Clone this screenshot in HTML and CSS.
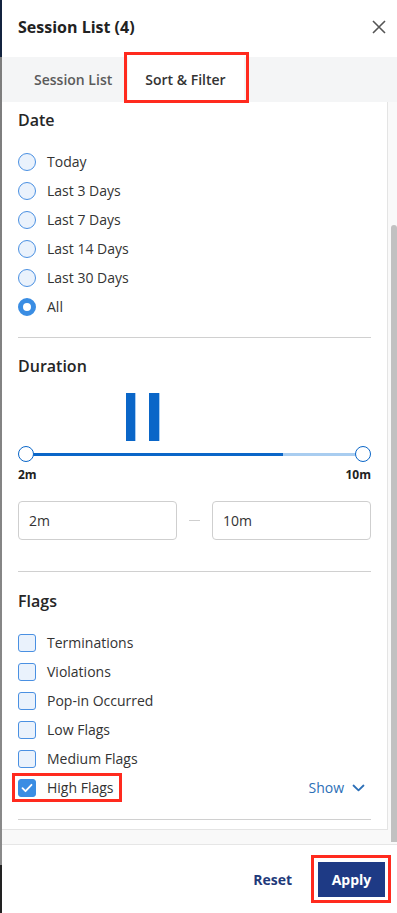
FILE: index.html
```html
<!DOCTYPE html>
<html lang="en">
<head>
<meta charset="utf-8">
<title>Session List</title>
<link rel="stylesheet" href="styles.css">
</head>
<body>
<div class="page">
  <div class="edge"></div>
  <div class="panel">
    <header class="head">
      <h1 class="title">Session List (4)</h1>
      <button class="close" aria-label="Close">
        <svg width="14" height="14" viewBox="0 0 14 14"><path d="M1 1L13 13M13 1L1 13" stroke="#555" stroke-width="1.6" fill="none"/></svg>
      </button>
    </header>
    <nav class="tabs">
      <div class="tab">Session List</div>
      <div class="tab active">Sort &amp; Filter<span class="mark mark-tab"></span></div>
    </nav>
    <div class="scroll">
      <div class="viewport">
        <div class="card">
          <section class="sec sec-date">
            <h2 class="h">Date</h2>
            <ul class="opts">
              <li class="opt"><span class="radio"></span>Today</li>
              <li class="opt"><span class="radio"></span>Last 3 Days</li>
              <li class="opt"><span class="radio"></span>Last 7 Days</li>
              <li class="opt"><span class="radio"></span>Last 14 Days</li>
              <li class="opt"><span class="radio"></span>Last 30 Days</li>
              <li class="opt"><span class="radio on"></span>All</li>
            </ul>
          </section>
          <section class="sec sec-dur">
            <h2 class="h">Duration</h2>
            <div class="hist">
              <span class="bar b1"></span>
              <span class="bar b2"></span>
            </div>
            <div class="slider">
              <div class="track"><div class="fill" style="width:76.3%"></div></div>
              <span class="knob"></span>
              <span class="knob"></span>
            </div>
            <div class="ends"><span>2m</span><span>10m</span></div>
            <div class="range">
              <div class="field">2m</div>
              <span class="dash"></span>
              <div class="field">10m</div>
            </div>
          </section>
          <section class="sec sec-flags">
            <h2 class="h">Flags</h2>
            <ul class="opts">
              <li class="opt"><span class="check"></span>Terminations</li>
              <li class="opt"><span class="check"></span>Violations</li>
              <li class="opt"><span class="check"></span>Pop-in Occurred</li>
              <li class="opt"><span class="check"></span>Low Flags</li>
              <li class="opt"><span class="check"></span>Medium Flags</li>
              <li class="opt last">
                <span class="hl"><span class="check on"><svg width="12" height="10" viewBox="0 0 12 10"><path d="M1.5 5.2L4.5 8.2L10.5 1.8" stroke="#fff" stroke-width="1.8" fill="none" stroke-linecap="round" stroke-linejoin="round"/></svg></span>High Flags<span class="mark mark-flag"></span></span>
                <span class="show">Show <svg width="13" height="8" viewBox="0 0 13 8"><path d="M1.5 1.5L6.5 6.3L11.5 1.5" stroke="#2c6fb7" stroke-width="1.8" fill="none" stroke-linecap="round" stroke-linejoin="round"/></svg></span>
              </li>
            </ul>
          </section>
        </div>
      </div>
      <div class="sbar"><div class="thumb"></div></div>
    </div>
    <footer class="foot">
      <button class="reset">Reset</button>
      <button class="apply">Apply<span class="mark mark-apply"></span></button>
    </footer>
  </div>
</div>
</body>
</html>
```

FILE: styles.css
```css
* { box-sizing: border-box; }
html, body { margin: 0; padding: 0; }
body {
  font-family: "Open Sans", "Noto Sans", sans-serif;
  color: #333;
  background: #fff;
}
.page {
  display: flex;
  width: 397px;
  height: 913px;
  overflow: hidden;
}
.edge {
  width: 2px;
  flex: none;
  background: linear-gradient(#13233f 0, #13233f 57px, #7d7d7d 57px, #8a8a8a 865px, #222 865px);
}
.panel {
  flex: 1;
  display: flex;
  flex-direction: column;
  background: #fff;
}
.head {
  height: 57px;
  display: flex;
  align-items: center;
  justify-content: space-between;
  padding: 0 10px 3px 16px;
}
.title {
  margin: 0;
  font-size: 16px;
  font-weight: 700;
  color: #222;
}
.close {
  border: 0;
  background: none;
  padding: 0;
  width: 16px;
  height: 16px;
  display: flex;
  align-items: center;
  justify-content: center;
}
.tabs {
  height: 45px;
  background: #f4f5f6;
  display: flex;
  padding-left: 15px;
}
.tab {
  position: relative;
  display: flex;
  align-items: center;
  padding: 0 17px;
  font-size: 14px;
  font-weight: 600;
  color: #5a5a5a;
}
.tab.active {
  background: #fff;
  color: #333;
  margin-left: -1px;
  padding: 0 18px 0 17px;
  border-bottom: 1.5px solid #6b4fa0;
}
.mark {
  position: absolute;
  border: 3px solid #ff2a1e;
  pointer-events: none;
}
.mark-tab { left: -4px; right: -5px; top: -5px; bottom: -2px; }
.scroll {
  height: 743px;
  display: flex;
  border-bottom: 1px solid #e6e6e6;
}
.viewport {
  flex: 1;
  background: #f9f9f9;
}
.card {
  height: 728px;
  background: #fff;
  border-right: 1px solid #e4e4e4;
  border-bottom: 1px solid #e4e4e4;
  padding: 7px 16px 0 16px;
  overflow: hidden;
}
.sbar {
  width: 9px;
  background: #f9f9f9;
  padding: 123px 0 2px 3px;
}
.thumb {
  height: 100%;
  background: #c1c1c1;
  border-radius: 3px 3px 0 0;
}
.sec { border-bottom: 1px solid #d0d0d0; }
.h {
  margin: 0;
  font-size: 16px;
  line-height: 22px;
  font-weight: 600;
  color: #262626;
}
.opts {
  list-style: none;
  margin: 16px 0 0;
  padding: 0;
}
.opt {
  height: 29px;
  display: flex;
  align-items: center;
  font-size: 14px;
  color: #333;
}
.sec-date { padding-bottom: 16px; }
.sec-dur { padding-top: 17px; padding-bottom: 31px; }
.sec-flags { padding-top: 18px; padding-bottom: 17px; }
.radio {
  width: 18px;
  height: 18px;
  border-radius: 50%;
  border: 1.5px solid #4a90e2;
  background: #eaf2fc;
  margin-right: 11px;
  flex: none;
}
.radio.on {
  background: #fff;
  border: 5px solid #3a8de3;
}
.check {
  width: 18px;
  height: 18px;
  border-radius: 3px;
  border: 1.5px solid #4a90e2;
  background: #eaf2fc;
  margin-right: 11px;
  flex: none;
  display: flex;
  align-items: center;
  justify-content: center;
}
.check.on {
  background: #3a8de3;
  border-color: #3a8de3;
}
.last { justify-content: space-between; }
.hl {
  position: relative;
  display: flex;
  align-items: center;
}
.mark-flag { left: -6px; right: -8px; top: -5px; bottom: -5px; }
.show {
  display: flex;
  align-items: center;
  gap: 8px;
  color: #2c6fb7;
  font-size: 14px;
  margin-right: 6px;
}
.hist {
  margin-top: 16px;
  height: 48px;
  display: flex;
  gap: 14px;
  padding-left: 108px;
}
.bar {
  width: 9px;
  height: 48px;
  background: #0a66c8;
  box-shadow: 1px 0 0 #a9cdf2;
}
.b2 { width: 10px; }
.slider {
  position: relative;
  margin-top: 5px;
  height: 16px;
  display: flex;
  align-items: center;
  justify-content: space-between;
}
.track {
  position: absolute;
  left: 8px;
  right: 8px;
  top: 6.5px;
  height: 3px;
  background: #a9cdf0;
}
.fill { height: 100%; background: #0a66c8; }
.knob {
  position: relative;
  width: 16px;
  height: 16px;
  border-radius: 50%;
  border: 1.5px solid #0a66c8;
  background: #fff;
}
.ends {
  display: flex;
  justify-content: space-between;
  font-size: 12px;
  font-weight: 700;
  line-height: 16px;
  color: #222;
  margin-top: 5px;
}
.range {
  margin-top: 18px;
  display: flex;
  align-items: center;
  gap: 12px;
}
.field {
  flex: 1;
  height: 39px;
  border: 1px solid #cfcfcf;
  border-radius: 4px;
  display: flex;
  align-items: center;
  padding-left: 10px;
  font-size: 14px;
  color: #333;
}
.dash {
  width: 11px;
  height: 1px;
  background: #cfcfcf;
}
.foot {
  flex: 1;
  display: flex;
  align-items: center;
  justify-content: flex-end;
  gap: 26px;
  padding: 0 12px 0 0;
}
.reset {
  border: 0;
  background: none;
  padding: 0;
  font-family: inherit;
  font-size: 14px;
  font-weight: 700;
  color: #1f3a7a;
}
.apply {
  position: relative;
  border: 0;
  width: 67px;
  height: 35px;
  background: #1e3a85;
  color: #fff;
  font-family: inherit;
  font-size: 14px;
  font-weight: 700;
  padding: 0;
}
.mark-apply { left: -7px; right: -6px; top: -7px; bottom: -6px; }
```
